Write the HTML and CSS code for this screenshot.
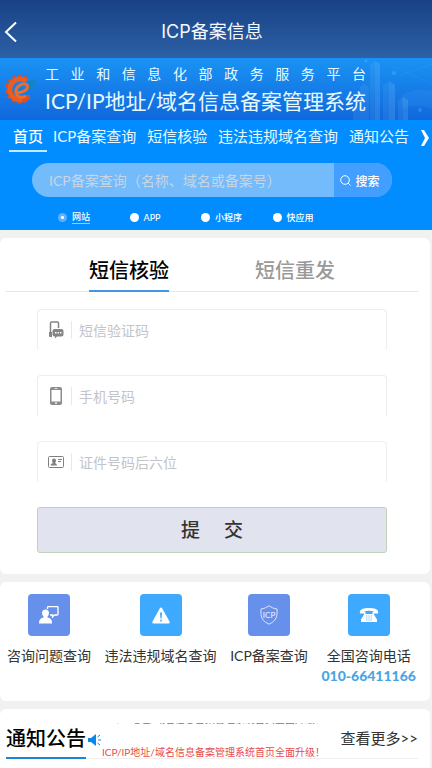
FILE: index.html
```html
<!DOCTYPE html>
<html lang="zh-CN">
<head>
<meta charset="utf-8">
<meta name="viewport" content="width=device-width, initial-scale=1">
<title>ICP备案信息</title>
<link rel="stylesheet" href="styles.css">
</head>
<body>
<header class="topbar">
  <button class="back" type="button" aria-label="返回">
    <svg width="14" height="22" viewBox="0 0 14 22" fill="none" stroke="#fff" stroke-width="2"><path d="M12 1.500 2 11l10 9.500"/></svg>
  </button>
  <h1 class="topbar-title">ICP备案信息</h1>
</header>

<section class="banner">
  <svg class="skyline" width="80" height="62" viewBox="0 0 80 62" fill="none">
    <g fill="#8fd0ff" fill-opacity=".1">
      <path d="M18 62V6l5-3 5 3v56zM31 62V27l6-4 6 4v35zM8 62V29l4-3 5 3v33zM46 62V42l5-3 5 3v20zM1 62V50l4-3 3 3v12z"/>
      <path d="M23 3v59h5V6zM37 23v39h6V27zM51 39v23h5V42z"/>
      <path d="M50 37q14-8 30-4v17q-14-4-30 0z" fill-opacity=".08"/>
    </g>
    <path d="M46 18l34-12M40 8l40 18" stroke="#a9dcff" stroke-opacity=".08"/>
    <g fill="#a9dcff" fill-opacity=".2"><circle cx="42" cy="15" r="2"/><circle cx="14" cy="3" r="1.500"/><circle cx="68" cy="52" r="2"/></g>
  </svg>
  <svg class="logo" width="36" height="32" viewBox="0 0 36 32" fill="none">
    <path d="M25 5.500A13 13 0 1 0 26 26" stroke="#d94f22" stroke-width="3" stroke-dasharray="3.500 2.300"/>
    <path d="M24.500 8A10.500 10.500 0 1 0 25 24.500" stroke="#ec5c1e" stroke-width="5"/>
    <path d="M21 22h7v5h-4v2h-4z" fill="#d94f22"/>
    <path d="M26 8q9-3 8 2-1 6-11 8-7 1.500-10-2 10 1 13-3 1.500-2 0-5z" fill="#1583c4"/>
    <path d="M15 19.500c4 .5 10-1.500 10.500-5.500.3-3-4-4-7.500-2-4 2.500-5.500 7-3 10 2 2.500 6 2.500 9 1" stroke="#f26c28" stroke-width="3"/>
  </svg>
  <div class="banner-text">
    <p class="banner-sub">工业和信息化部政务服务平台</p>
    <p class="banner-title">ICP/IP地址/域名信息备案管理系统</p>
  </div>
</section>

<section class="hero">
  <nav class="nav">
    <a class="active" href="#">首页</a>
    <a href="#">ICP备案查询</a>
    <a href="#">短信核验</a>
    <a href="#">违法违规域名查询</a>
    <a href="#">通知公告</a>
    <button class="nav-next" type="button" aria-label="更多栏目">
      <svg width="10" height="16" viewBox="0 0 10 16" fill="#fff"><path d="M1 0h3l5 8-5 8H1l4-8z"/></svg>
    </button>
  </nav>
  <form class="search">
    <input class="search-input" type="text" aria-label="ICP备案查询" placeholder="ICP备案查询（名称、域名或备案号）">
    <button class="search-btn" type="button">
      <svg width="11" height="11" viewBox="0 0 11 11" fill="none" stroke="#fff"><circle cx="5" cy="5" r="4.300"/><path d="m8 8 2.500 2.500"/></svg>
      搜索
    </button>
  </form>
  <div class="kinds">
    <label class="kind"><input type="radio" name="kind" checked><span>网站</span></label>
    <label class="kind"><input type="radio" name="kind"><span>APP</span></label>
    <label class="kind"><input type="radio" name="kind"><span>小程序</span></label>
    <label class="kind"><input type="radio" name="kind"><span>快应用</span></label>
  </div>
</section>

<main>
  <section class="card verify">
    <div class="tabs">
      <button class="tab current" type="button">短信核验</button>
      <button class="tab" type="button">短信重发</button>
    </div>
    <form class="form">
      <label class="field">
        <svg width="16" height="18" viewBox="0 0 16 18"><path d="M2.500 12V2q0-1 1-1h6q1 0 1 1v5" fill="none" stroke="#858585" stroke-width="1.500"/><path d="M1 11h3v5H2q-1 0-1-1zM6.500 8h7q2 0 2 2v3.500q0 2-2 2H9L7 17.500v-2h-.5q-2 0-2-2V10q0-2 2-2z" fill="#858585"/><path d="M7 11h1.500v1.500H7zM9.500 11H11v1.500H9.500zM12 11h1.500v1.500H12z" fill="#fff"/></svg>
        <input type="text" aria-label="短信验证码" placeholder="短信验证码">
      </label>
      <label class="field">
        <svg width="16" height="18" viewBox="0 0 16 18"><rect x="2" y="0" width="12" height="18" rx="2" fill="#8c8c8c"/><path d="M3.500 3h9v11.500h-9z" fill="#fff"/><path d="M6.500 1.200h3v.8h-3zM7 15.500h2v1.300H7z" fill="#fff"/></svg>
        <input type="tel" aria-label="手机号码" placeholder="手机号码">
      </label>
      <label class="field">
        <svg width="16" height="18" viewBox="0 0 16 18"><rect x=".5" y="3.500" width="15" height="11" rx="1" fill="none" stroke="#808080"/><path d="M2.500 12.500q0-2 2.500-2.500-1-1-1-2.500Q4 5.500 6 5.500t2 2Q8 9 7 10q2 .5 2 2.500z" fill="#808080"/><path d="M10 6.500h4M10 8.500h3" stroke="#808080"/></svg>
        <input type="text" aria-label="证件号码后六位" placeholder="证件号码后六位">
      </label>
      <button class="submit" type="button"><span>提</span><span>交</span></button>
    </form>
  </section>

  <section class="card links">
    <a class="link" href="#">
      <span class="tile violet"><svg width="20" height="18" viewBox="0 0 20 18"><path d="M8.500 3V1.500q0-1 1-1h8.500q1 0 1 1V8q0 1-1 1h-2.500L13.500 11V9H11" fill="none" stroke="#fff" stroke-width="1.300"/><path d="M3 7q0-3.500 3.500-3.500T10 7q0 2-1.500 3.500v1q4.500.5 4.500 5.500v.5H0V17q0-5 4.500-5.500v-1Q3 9 3 7z" fill="#fff"/></svg></span>
      <span>咨询问题查询</span>
    </a>
    <a class="link" href="#">
      <span class="tile sky"><svg width="18" height="17" viewBox="0 0 18 17"><path d="M9 .5q.8 0 1.300 1L17.500 14.500q.8 2-1 2h-15q-1.800 0-1-2L7.700 1.500q.5-1 1.300-1z" fill="#fff"/><path d="M8 5.500h2l-.4 6H8.400zM8.200 12.800h1.600v1.600H8.200z" fill="#3da9ff"/></svg></span>
      <span>违法违规域名查询</span>
    </a>
    <a class="link" href="#">
      <span class="tile violet"><svg class="shield" width="18" height="20" viewBox="0 0 18 20"><path d="M9 .8Q5.500 3.500 1 4v5.500Q1.500 16 9 19.200 16.500 16 17 9.500V4Q12.500 3.500 9 .8z" fill="none" stroke="#dbe5ff"/><text x="9" y="13" text-anchor="middle">ICP</text></svg></span>
      <span>ICP备案查询</span>
    </a>
    <a class="link" href="#">
      <span class="tile sky"><svg width="20" height="16" viewBox="0 0 20 16"><path d="M1 6.500Q-.5 1 10 1t9 5.500h-4.500V4.300q-4.500-1-9 0v2.200z" fill="#fff"/><path d="M6.500 5v2h7V5H15v2.500l3 5V15H2v-2.500l3-5V5z" fill="#fff"/><path d="M7 9h1.500M9.300 9h1.500M11.500 9H13M7 11h1.500M9.300 11h1.500M11.500 11H13M7 13h1.500M9.300 13h1.500M11.500 13H13" stroke="#3da9ff" stroke-opacity=".6"/></svg></span>
      <span>全国咨询电话</span>
      <strong>010-66411166</strong>
    </a>
  </section>

  <section class="card notice">
    <div class="notice-head">
      <h2>通知公告</h2>
      <svg class="horn" width="14" height="12" viewBox="0 0 14 12"><path d="M0 4h3l5-4v12L3 8H0z" fill="#0a88ea"/><path d="m9.500 3 2.500-2M10 6h3M9.500 9l2.500 2" stroke="#0a88ea" fill="none"/></svg>
      <ul class="ticker">
        <li>ICP/IP地址/域名信息备案管理系统首页全面升级！</li>
        <li>ICP/IP地址/域名信息备案管理系统首页全面升级！</li>
      </ul>
      <a class="more" href="#">查看更多&gt;&gt;</a>
    </div>
  </section>
</main>
</body>
</html>
```

FILE: styles.css
```css
* { box-sizing: border-box; }

html { overflow: hidden; }

body {
  margin: 0;
  height: 100vh;
  overflow: hidden;
  background: #f1f1f1;
  color: #333;
  font-family: Lato, "Noto Sans CJK SC", sans-serif;
  font-size: 14px;
}

h1, h2, p, ul { margin: 0; padding: 0; font-weight: 400; }
ul { list-style: none; }
a { color: inherit; text-decoration: none; }
button, input { font: inherit; color: inherit; border: 0; padding: 0; margin: 0; background: none; outline: 0; }
svg { display: block; flex: none; }

.topbar {
  display: grid;
  grid-template-columns: 32px 1fr 44px;
  align-items: center;
  height: 58px;
  padding: 6px 0 0 4px;
  background: linear-gradient(#184285, #2d60a6);
  color: #f4f8ff;
}
.topbar-title {
  font-family: Inter, "Noto Sans CJK SC", sans-serif;
  font-size: 18px;
  line-height: 24px;
  text-align: center;
}

.banner {
  position: relative;
  display: flex;
  align-items: center;
  height: 62px;
  padding-left: 2px;
  background: linear-gradient(#1a93f4, #1168dc);
  color: #e6faff;
}
.skyline { position: absolute; right: 0; top: 0; }
.logo { margin-right: 7px; }
.banner-text { position: relative; display: flex; flex-direction: column; }
.banner-sub { font-size: 14px; line-height: 24px; width: 0; min-width: 100%; text-align: justify; text-align-last: justify; white-space: nowrap; }
.banner-title { font-size: 21px; line-height: 30px; white-space: nowrap; }

.hero { height: 110px; background: #018dff; color: #e6faff; }
.nav {
  display: flex;
  justify-content: space-between;
  padding: 3px 2px 0 9px;
  font-size: 15px;
  line-height: 27px;
  white-space: nowrap;
}
.nav a { border-bottom: 2px solid transparent; }
.nav .active { margin-right: -5px; padding: 0 4px; border-color: #c3eaff; font-weight: 500; color: #fff; }

.search {
  display: flex;
  height: 34px;
  margin: 11px 40px 0 32px;
  border-radius: 17px;
  overflow: hidden;
  background: #73bbfb;
}
.search-input { flex: 1; min-width: 0; padding-left: 17px; font-size: 14px; }
.search-input::placeholder { color: #c8d5e4; }
.search-btn {
  display: flex;
  align-items: center;
  justify-content: center;
  gap: 4px;
  width: 58px;
  padding-right: 6px;
  background: #439fff;
  color: #fff;
  font-size: 12px;
  font-weight: 500;
}

.kinds {
  display: grid;
  grid-template-columns: repeat(4, 1fr);
  margin: 14px 88px 0 58px;
  font-size: 9px;
  line-height: 12px;
  font-weight: 500;
  color: #fff;
}
.kind { display: flex; align-items: center; gap: 5px; white-space: nowrap; }
.kind input { appearance: none; width: 9px; height: 9px; border-radius: 50%; background: #fff; }
.kind input:checked { background: radial-gradient(circle, #fff 1px, #5fb0ff 2px); }
.kind input:checked + span { border-bottom: 1px solid #8fd0ff; }

.card { margin: 8px 2px 0 0; border-radius: 6px; background: #fff; }

.verify { padding: 18px 12px 21px 6px; }
.tabs { display: flex; justify-content: center; gap: 86px; border-bottom: 1px solid #e6e6e6; }
.tab {
  height: 36px;
  padding-bottom: 8px;
  margin-bottom: -1px;
  border-bottom: 2px solid transparent;
  font-size: 20px;
  line-height: 28px;
  font-weight: 500;
  color: #999;
}
.tab.current { color: #000; border-color: #4197e0; }

.form { display: flex; flex-direction: column; gap: 24px; margin: 17px 31px 0; }
.field {
  display: flex;
  align-items: center;
  height: 42px;
  padding-left: 10px;
  border: 1px solid #eee;
  border-bottom-color: transparent;
  border-radius: 4px;
}
.field input {
  flex: 1;
  min-width: 0;
  height: 18px;
  margin-left: 7px;
  padding-left: 7px;
  border-left: 1px solid #e8e8e8;
}
.field input::placeholder { color: #c3c4ca; }
.submit {
  display: flex;
  align-items: center;
  justify-content: center;
  gap: 24px;
  height: 46px;
  padding-bottom: 3px;
  border: 1px solid #c0d3b9;
  border-radius: 3px;
  background: #e1e4ef;
  font-size: 19px;
  font-weight: 500;
}

.links { display: flex; justify-content: space-between; height: 119px; padding: 12px 14px 0 7px; }
.link { display: flex; flex-direction: column; align-items: center; line-height: 20px; white-space: nowrap; }
.tile { display: grid; place-items: center; width: 42px; height: 42px; margin-bottom: 10px; border-radius: 4px; }
.violet { background: #6690ea; }
.sky { background: #3da9ff; }
.shield text { font: 8px Lato, sans-serif; fill: #eef3ff; }
.link strong { font-size: 14px; font-weight: 900; color: #4ba5e3; }

.notice { padding: 13px 12px 24px 6px; }
.notice-head { display: flex; align-items: center; height: 37px; border-bottom: 1px solid #eee; }
.notice h2 { height: 37px; border-bottom: 2px solid #1c86d1; font-size: 20px; line-height: 32px; font-weight: 500; color: #000; }
.horn { margin-left: 2px; }
.ticker { flex: 1; height: 35px; overflow: hidden; font-size: 10px; line-height: 33px; color: #e64b4b; white-space: nowrap; }
.ticker li:first-child { margin-top: -20px; }
.more { padding-bottom: 4px; font-size: 15px; line-height: 20px; }
```
